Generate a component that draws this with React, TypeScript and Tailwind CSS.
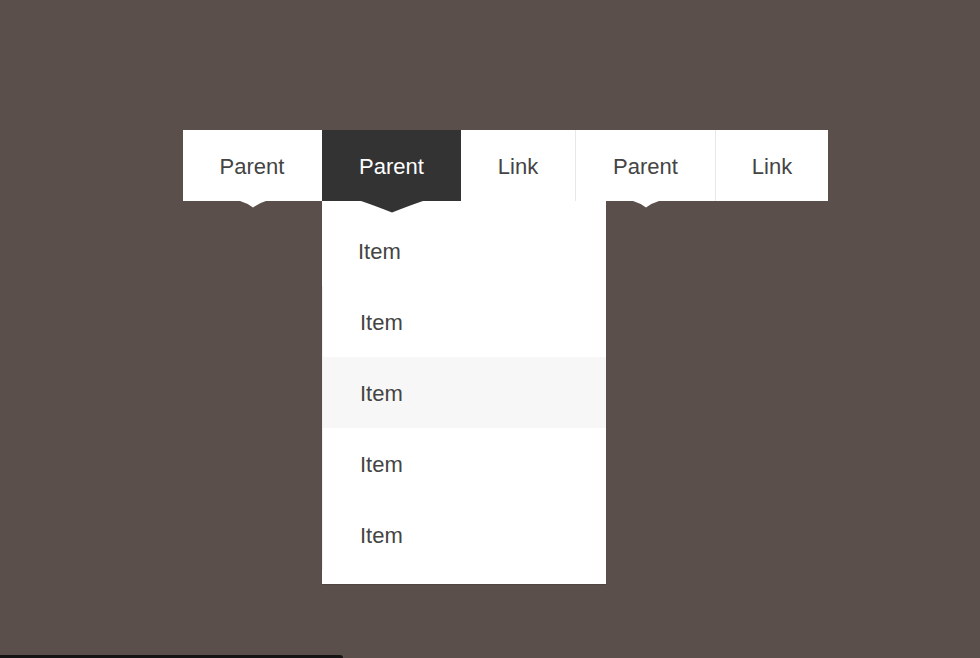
import React from "react";

const font = { fontFamily: '"Liberation Sans", Arial, sans-serif' };

function Notch({ dark }: { dark?: boolean }) {
  if (dark) {
    return (
      <svg
        className="absolute left-1/2 top-full -translate-x-1/2 z-20"
        width="62"
        height="12"
        viewBox="0 0 62 12"
      >
        <path d="M0 0 H62 Q50 4 31 11.5 Q12 4 0 0 Z" fill="#333333" />
      </svg>
    );
  }
  return (
    <svg
      className="absolute left-1/2 top-full -translate-x-1/2 z-20"
      width="26"
      height="7"
      viewBox="0 0 26 7"
    >
      <path d="M0 0 H26 Q19 2 13 6.5 Q7 2 0 0 Z" fill="#ffffff" />
    </svg>
  );
}

export default function App() {
  const items = ["Item", "Item", "Item", "Item", "Item"];
  return (
    <div
      className="w-full h-[658px] bg-[#5b4f4b] flex flex-col overflow-hidden"
      style={font}
    >
      <div className="flex-1 pt-[130px] pl-[183px]">
        <nav className="flex h-[71px] text-[22px] text-[#444444]">
          <div className="relative flex items-center bg-white w-[139px] justify-center pt-[2px] pr-px">
            Parent
            <Notch />
          </div>
          <div className="relative flex items-center bg-[#333333] text-white w-[139px] justify-center pt-[2px]">
            Parent
            <Notch dark />
            <div className="absolute left-0 top-full w-[284px] bg-white pt-[14px] pb-[14px] z-10 shadow-[0_1px_1px_rgba(0,0,0,0.12)] text-[#444444]">
              {items.map((t, i) => (
                <div
                  key={i}
                  className={
                    i === 0
                      ? "h-[71px] flex items-center pl-[36px] pt-[2px]"
                      : i === 2
                      ? "h-[71px] flex items-center pl-[37px] pt-[2px] border-l border-[#f0f0f0] bg-[#f7f7f7]"
                      : "h-[71px] flex items-center pl-[37px] pt-[2px] border-l border-[#f0f0f0]"
                  }
                >
                  {t}
                </div>
              ))}
            </div>
          </div>
          <div className="relative flex items-center bg-white w-[114px] justify-center pt-[2px]">
            Link
          </div>
          <div className="relative flex items-center bg-white w-[140px] justify-center pt-[2px] border-l border-[#e8e8e8]">
            Parent
            <Notch />
          </div>
          <div className="relative flex items-center bg-white w-[113px] justify-center pt-[2px] border-l border-[#e8e8e8]">
            Link
          </div>
        </nav>
      </div>
      <div className="h-[3px] w-[343px] bg-[#141414] rounded-tr-[3px]" />
    </div>
  );
}
